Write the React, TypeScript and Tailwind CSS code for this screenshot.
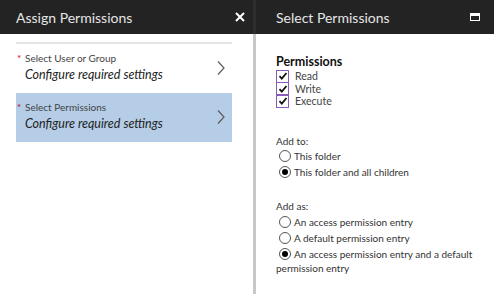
import React from 'react';

const font = { fontFamily: 'Lato, "Noto Sans", sans-serif' };

function Chevron() {
  return (
    <svg className="w-[10px] h-[16px] text-[#5a5a5a]" viewBox="0 0 10 16" fill="none" stroke="currentColor" strokeWidth={1.2}>
      <path d="M2 1.5l6 6.5-6 6.5" />
    </svg>
  );
}

function CheckBox({ label }: { label: string }) {
  return (
    <div className="flex items-center h-[12.5px]">
      <div className="w-[13px] h-[13px] border border-[#8a5ab8] flex items-center justify-center bg-white shrink-0">
        <svg className="w-[10px] h-[10px]" viewBox="0 0 10 10" fill="none" stroke="#111" strokeWidth={1.8}>
          <path d="M1.5 5.2l2.3 2.4 4.7-5.6" />
        </svg>
      </div>
      <span className="ml-[6px] text-[10.5px] leading-[12px] text-[#444]">{label}</span>
    </div>
  );
}

function Radio({ label, checked }: { label: string; checked?: boolean }) {
  return (
    <div className="flex items-center h-[16px] pl-[3px]">
      <div className="w-[12px] h-[12px] rounded-full border border-[#555] flex items-center justify-center bg-white shrink-0">
        {checked && <div className="w-[6px] h-[6px] rounded-full bg-black" />}
      </div>
      <span className="ml-[3px] text-[10px] leading-[14px] text-[#333] whitespace-nowrap">{label}</span>
    </div>
  );
}

function NavItem({ title, active }: { title: string; active?: boolean }) {
  return (
    <div className={`relative h-[49px] pl-[1px] pt-[7px] ${active ? 'bg-[#b5cde7]' : 'bg-white'}`}>
      <div className="flex items-start text-[10px] text-[#444] leading-[14px]">
        <span className="text-[#d0021b] w-[8px]">*</span>
        <span>{title}</span>
      </div>
      <div className="italic text-[12.5px] text-[#222] leading-[19px] pl-[8px]">Configure required settings</div>
      <div className="absolute right-[6px] top-[16px]">
        <Chevron />
      </div>
    </div>
  );
}

export default function App() {
  return (
    <div className="w-[494px] h-[294px] flex bg-white overflow-hidden" style={font}>
      {/* left blade */}
      <div className="w-[253px] flex flex-col">
        <div className="h-[34px] bg-[#232323] flex items-center justify-between pl-[16px] pr-[8px]">
          <span className="text-[14px] text-[#e6e6e6]">Assign Permissions</span>
          <svg className="w-[10px] h-[10px]" viewBox="0 0 10 10" stroke="#fff" strokeWidth={2}>
            <path d="M1 1l8 8M9 1l-8 8" />
          </svg>
        </div>
        <div className="pl-[16px] pr-[21px] pt-[8px]">
          <div className="border-t-2 border-[#e4e4e4]" />
          <NavItem title="Select User or Group" />
          <NavItem title="Select Permissions" active />
        </div>
      </div>

      <div className="w-[3px] flex flex-col">
        <div className="h-[34px] bg-[#2e2e2e]" />
        <div className="flex-1 bg-[#c8c8c8]" />
      </div>

      {/* right blade */}
      <div className="flex-1 flex flex-col">
        <div className="h-[34px] bg-[#232323] flex items-center justify-between pl-[20px] pr-[14px]">
          <span className="text-[14px] text-[#e6e6e6]">Select Permissions</span>
          <div className="w-[10px] h-[8px] border border-white border-t-[3px]" />
        </div>
        <div className="pl-[20px] pt-[20px]">
          <div className="text-[12.5px] font-bold text-[#111] leading-[16px]">Permissions</div>
          <div className="flex flex-col">
            <CheckBox label="Read" />
            <CheckBox label="Write" />
            <CheckBox label="Execute" />
          </div>

          <div className="mt-[26px] text-[10px] text-[#333] leading-[14px]">Add to:</div>
          <Radio label="This folder" />
          <Radio label="This folder and all children" checked />

          <div className="mt-[19px] text-[10px] text-[#333] leading-[15px]">Add as:</div>
          <Radio label="An access permission entry" />
          <Radio label="A default permission entry" />
          <Radio label="An access permission entry and a default" checked />
          <div className="text-[10px] text-[#333] leading-[12px]">permission entry</div>
        </div>
      </div>
    </div>
  );
}
